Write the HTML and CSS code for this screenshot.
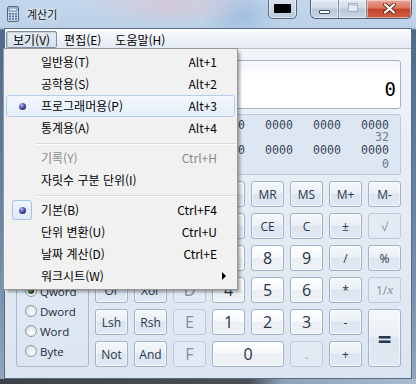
FILE: index.html
```html
<!DOCTYPE html>
<html lang="ko">
<head>
  <meta charset="UTF-8">
  <meta name="viewport" content="width=device-width, initial-scale=1.0">
  <title>계산기</title>
  <link rel="stylesheet" href="styles.css">
</head>
<body>

  <div class="window">
    <div class="titlebar">
      <svg class="app-icon" width="16" height="16" viewBox="0 0 16 16">
        <rect x="2.5" y="0.5" width="11" height="15" rx="1.5" fill="#cfd8e2" stroke="#56687c"/>
        <rect x="4" y="2" width="8" height="3" fill="#d8ecfa" stroke="#4f7fa8" stroke-width="0.8"/>
        <g fill="#3f78b5">
          <rect x="4" y="7" width="2" height="1.6"/><rect x="7" y="7" width="2" height="1.6"/><rect x="10" y="7" width="2" height="1.6"/>
          <rect x="4" y="9.6" width="2" height="1.6"/><rect x="7" y="9.6" width="2" height="1.6"/><rect x="10" y="9.6" width="2" height="1.6"/>
          <rect x="4" y="12.2" width="2" height="1.6"/><rect x="7" y="12.2" width="2" height="1.6"/><rect x="10" y="12.2" width="2" height="1.6"/>
        </g>
      </svg>
      <span class="title">계산기</span>
      <div class="tool-btn"><span class="tool-glyph"></span></div>
      <div class="caption">
        <div class="cap cap-min"><span class="min-glyph"></span></div>
        <div class="cap cap-max"><span class="max-glyph"></span></div>
        <div class="cap cap-close">
          <svg width="13" height="11" viewBox="0 0 13 11">
            <path d="M2 1.5 L11 9.5 M11 1.5 L2 9.5" stroke="#6a2a1e" stroke-width="4" stroke-linecap="round"/>
            <path d="M2 1.5 L11 9.5 M11 1.5 L2 9.5" stroke="#ffffff" stroke-width="2.2" stroke-linecap="round"/>
          </svg>
        </div>
      </div>
    </div>

    <div class="client">
      <div class="menubar">
        <span class="mb-item open">보기(V)</span>
        <span class="mb-item">편집(E)</span>
        <span class="mb-item">도움말(H)</span>
      </div>

      <div class="content">
        <div class="display"><span class="result">0</span></div>

        <div class="bits">
          <span>0000</span><span>0000</span><span>0000</span><span>0000</span>
          <span>0000</span><span>0000</span><span>0000</span><span>0000</span>
          <span class="lbl c1">63</span><span class="lbl c5">47</span><span class="lbl c8">32</span>
          <span>0000</span><span>0000</span><span>0000</span><span>0000</span>
          <span>0000</span><span>0000</span><span>0000</span><span>0000</span>
          <span class="lbl c1">31</span><span class="lbl c5">15</span><span class="lbl c8">0</span>
        </div>

        <div class="lower">
          <div class="modes">
            <div class="group">
              <div class="radio"><span class="ring"></span>Hex</div>
              <div class="radio on"><span class="ring"></span>Dec</div>
              <div class="radio"><span class="ring"></span>Oct</div>
              <div class="radio"><span class="ring"></span>Bin</div>
            </div>
            <div class="group">
              <div class="radio on"><span class="ring"></span>Qword</div>
              <div class="radio"><span class="ring"></span>Dword</div>
              <div class="radio"><span class="ring"></span>Word</div>
              <div class="radio"><span class="ring"></span>Byte</div>
            </div>
          </div>

          <div class="keypad">
            <div class="key off"></div>
            <div class="key">Mod</div>
            <div class="key num off">A</div>
            <div class="key">MC</div>
            <div class="key">MR</div>
            <div class="key">MS</div>
            <div class="key">M+</div>
            <div class="key">M-</div>

            <div class="key">(</div>
            <div class="key">)</div>
            <div class="key num off">B</div>
            <div class="key">&larr;</div>
            <div class="key">CE</div>
            <div class="key">C</div>
            <div class="key">&plusmn;</div>
            <div class="key off">&radic;</div>

            <div class="key">RoL</div>
            <div class="key">RoR</div>
            <div class="key num off">C</div>
            <div class="key num">7</div>
            <div class="key num">8</div>
            <div class="key num">9</div>
            <div class="key">/</div>
            <div class="key">%</div>

            <div class="key">Or</div>
            <div class="key">Xor</div>
            <div class="key num off">D</div>
            <div class="key num">4</div>
            <div class="key num">5</div>
            <div class="key num">6</div>
            <div class="key">*</div>
            <div class="key off">1/<i>x</i></div>

            <div class="key">Lsh</div>
            <div class="key">Rsh</div>
            <div class="key num off">E</div>
            <div class="key num">1</div>
            <div class="key num">2</div>
            <div class="key num">3</div>
            <div class="key">-</div>
            <div class="key equals">=</div>

            <div class="key">Not</div>
            <div class="key">And</div>
            <div class="key num off">F</div>
            <div class="key num zero">0</div>
            <div class="key off">.</div>
            <div class="key">+</div>
          </div>
        </div>
      </div>
    </div>
    <div class="frame-bottom"></div>

    <!-- open "보기" menu -->
    <div class="dropdown">
      <div class="item"><span class="mark"></span><span class="label">일반용(T)</span><span class="keys">Alt+1</span><span class="sub"></span></div>
      <div class="item"><span class="mark"></span><span class="label">공학용(S)</span><span class="keys">Alt+2</span><span class="sub"></span></div>
      <div class="item hover"><span class="mark"><span class="bullet"></span></span><span class="label">프로그래머용(P)</span><span class="keys">Alt+3</span><span class="sub"></span></div>
      <div class="item"><span class="mark"></span><span class="label">통계용(A)</span><span class="keys">Alt+4</span><span class="sub"></span></div>
      <div class="sep"></div>
      <div class="item disabled"><span class="mark"></span><span class="label">기록(Y)</span><span class="keys">Ctrl+H</span><span class="sub"></span></div>
      <div class="item"><span class="mark"></span><span class="label">자릿수 구분 단위(I)</span><span class="keys"></span><span class="sub"></span></div>
      <div class="sep"></div>
      <div class="item checked"><span class="mark"><span class="bullet"></span></span><span class="label">기본(B)</span><span class="keys">Ctrl+F4</span><span class="sub"></span></div>
      <div class="item"><span class="mark"></span><span class="label">단위 변환(U)</span><span class="keys">Ctrl+U</span><span class="sub"></span></div>
      <div class="item"><span class="mark"></span><span class="label">날짜 계산(D)</span><span class="keys">Ctrl+E</span><span class="sub"></span></div>
      <div class="item"><span class="mark"></span><span class="label">워크시트(W)</span><span class="keys"></span><span class="sub"><span class="arrow"></span></span></div>
    </div>
  </div>

</body>
</html>
```

FILE: styles.css
```css
* {
  box-sizing: border-box;
}

html, body {
  margin: 0;
  padding: 0;
}

body {
  width: 416px;
  height: 384px;
  overflow: hidden;
  font-family: "Noto Sans CJK KR", "Noto Sans", sans-serif;
  font-size: 12px;
  color: #000;
}

.window {
  position: relative;
  width: 416px;
  height: 384px;
  display: flex;
  flex-direction: column;
  background:
    radial-gradient(ellipse 90px 20px at 170px 6px, rgba(214, 200, 214, 0.9), rgba(214, 200, 214, 0) 100%),
    radial-gradient(ellipse 40px 30px at 240px 14px, rgba(150, 185, 222, 0.8), rgba(150, 185, 222, 0) 100%),
    linear-gradient(180deg, #c3d7ec 0px, #bcd1e8 28px, #4d6a8b 30px, #6e8aa8 250px, #8ea6bf 378px);
}

/* title bar */

.titlebar {
  height: 28px;
  display: flex;
  align-items: flex-start;
  padding-left: 5px;
}

.app-icon {
  margin-top: 6px;
  flex: none;
}

.title {
  margin-left: 6px;
  margin-top: 6px;
  font-size: 11px;
  line-height: 16px;
  color: #111;
  text-shadow: 0 0 6px rgba(255, 255, 255, 0.9), 0 0 3px rgba(255, 255, 255, 0.9);
}

.tool-btn {
  margin-left: auto;
  margin-top: -1px;
  width: 29px;
  height: 20px;
  border: 1px solid #5b6b7e;
  border-top: none;
  border-radius: 0 0 5px 5px;
  background: linear-gradient(180deg, #d9e3ee, #b9c9db);
  display: flex;
  align-items: center;
  justify-content: center;
  box-shadow: inset 0 0 0 1px rgba(255, 255, 255, 0.5);
}

.tool-glyph {
  width: 17px;
  height: 9px;
  background: #000;
  border-radius: 1px;
}

.caption {
  margin-left: 13px;
  margin-right: 4px;
  width: 102px;
  height: 19px;
  display: flex;
  border: 1px solid #4f5e70;
  border-top: none;
  border-radius: 0 0 6px 6px;
  overflow: hidden;
}

.cap {
  height: 100%;
  display: flex;
  align-items: center;
  justify-content: center;
  background: linear-gradient(180deg, #e2e9f1 0%, #cfdbe7 45%, #b8c8da 50%, #c9d6e4 100%);
  box-shadow: inset 0 0 0 1px rgba(255, 255, 255, 0.45);
}

.cap-min {
  width: 28px;
  border-right: 1px solid #7e8da0;
}

.cap-max {
  width: 28px;
  border-right: 1px solid #7e8da0;
}

.cap-close {
  flex: 1;
  background: linear-gradient(180deg, #e9a796 0%, #d9735c 45%, #c4432c 52%, #d0604a 100%);
}

.min-glyph {
  width: 11px;
  height: 4px;
  margin-top: 6px;
  background: #fff;
  border: 1px solid #3c4b5d;
  border-radius: 1px;
}

.max-glyph {
  width: 10px;
  height: 9px;
  margin-top: -3px;
  border: 1px solid #a2afbe;
  background: #e4ebf2;
  box-shadow: inset 0 2px 0 #c4d0dd;
}

.cap-close svg {
  margin-top: -2px;
}

/* client area */

.client {
  margin: 0 4px;
  height: 351px;
  border: 1px solid #5a6c82;
  display: flex;
  flex-direction: column;
  background: linear-gradient(180deg, #f3f6fa 0%, #e7edf5 40%, #dbe5f1 100%);
}

.frame-bottom {
  flex: 1;
  background: linear-gradient(90deg, #3f4348 0%, #4b4f55 60%, #8ea3b9 68%, #a9bccf 100%);
}

.menubar {
  height: 20px;
  display: flex;
  align-items: flex-start;
  padding: 2px 0 0 1px;
  border-bottom: 1px solid #b7bfcb;
  background: linear-gradient(180deg, #fbfcfe, #e3e9f2);
}

.mb-item {
  height: 17px;
  padding: 0 6px;
  border: 1px solid transparent;
  border-radius: 2px;
  line-height: 15px;
}

.mb-item.open {
  border-color: #7f90a6;
  background: linear-gradient(180deg, #e6ecf3, #d6e0eb);
  box-shadow: inset 1px 1px 1px rgba(0, 0, 0, 0.12);
}

.content {
  flex: 1;
  padding: 11px 10px 0 11px;
  display: flex;
  flex-direction: column;
}

.display {
  height: 49px;
  border: 1px solid #a2b1c3;
  border-radius: 3px;
  background: linear-gradient(180deg, #f4f7fb, #ffffff 45%);
  display: flex;
  justify-content: flex-end;
  align-items: flex-end;
  padding: 0 4px 8px 0;
}

.result {
  font-family: "DejaVu Sans Mono", monospace;
  font-size: 19px;
  line-height: 22px;
}

.bits {
  margin-top: 5px;
  height: 61px;
  border: 1px solid #bac8d9;
  border-radius: 3px;
  background: #dde7f3;
  padding: 4px 0 0 8px;
  display: grid;
  grid-template-columns: repeat(8, 28px);
  grid-template-rows: 12px 13px 14px 13px;
  column-gap: 20px;
  font-family: "DejaVu Sans Mono", monospace;
  font-size: 11.6px;
  line-height: 13px;
  color: #3b4859;
}

.bits .lbl {
  color: #6a7888;
}

.bits .c1 {
  grid-column: 1;
}

.bits .c5 {
  grid-column: 5;
}

.bits .c8 {
  grid-column: 8;
  text-align: right;
}

.lower {
  margin-top: 6px;
  display: flex;
  gap: 6px;
}

.modes {
  width: 73px;
  display: flex;
  flex-direction: column;
  gap: 6px;
}

.group {
  height: 90px;
  border: 1px solid #a9b8ca;
  border-radius: 3px;
  padding-top: 3px;
}

.radio {
  height: 20px;
  display: flex;
  align-items: center;
  padding-left: 8px;
  font-family: "Open Sans", sans-serif;
  font-size: 11.5px;
  color: #1d2a3a;
}

.ring {
  width: 12px;
  height: 12px;
  margin-right: 3px;
  border-radius: 50%;
  border: 1px solid #8d99a6;
  background: radial-gradient(circle at 60% 65%, #ffffff 0%, #eceff2 45%, #c5ccd4 100%);
  display: flex;
  align-items: center;
  justify-content: center;
}

.radio.on .ring::after {
  content: "";
  width: 6px;
  height: 6px;
  border-radius: 50%;
  background: radial-gradient(circle at 35% 35%, #7fb07f, #1f5524 55%, #0c2a0f);
}

.keypad {
  display: grid;
  grid-template-columns: repeat(8, 33px);
  grid-template-rows: repeat(6, 26px);
  gap: 6px;
}

.key {
  border: 1px solid #a1b2c6;
  border-radius: 3px;
  background: linear-gradient(180deg, #f5f8fb 0%, #eaf0f6 46%, #dce5ef 52%, #e2e9f2 100%);
  box-shadow: inset 0 0 0 1px rgba(255, 255, 255, 0.55);
  display: flex;
  align-items: center;
  justify-content: center;
  font-family: "Open Sans", sans-serif;
  font-size: 12px;
  color: #26384e;
}

.key.num {
  background: linear-gradient(180deg, #ffffff 0%, #f7f9fc 46%, #ebf0f6 52%, #f0f4f8 100%);
  font-size: 16px;
  color: #2a3340;
}

.key.off {
  background: #e3eaf3;
  border-color: #bdc9d7;
  box-shadow: none;
  color: #7f8fa2;
}

.key.zero {
  grid-column: span 2;
}

.key.equals {
  grid-row: span 2;
  font-size: 24px;
  font-weight: 700;
}

.key i {
  font-family: "Liberation Serif", serif;
  font-size: 13px;
}

/* dropdown menu */

.dropdown {
  position: absolute;
  left: 3px;
  top: 48px;
  width: 235px;
  padding: 2px 1px;
  border: 1px solid #979797;
  background: #f1f1f1;
  box-shadow: 3px 3px 3px -1px rgba(0, 0, 0, 0.35);
  display: flex;
  flex-direction: column;
}

.item {
  height: 22px;
  margin: 0 1px;
  border: 1px solid transparent;
  border-radius: 3px;
  display: flex;
  align-items: center;
}

.item.hover {
  border-color: #b3cdee;
  background: linear-gradient(180deg, #f2f7fd, #e5eefa);
}

.item.disabled {
  color: #8a8a8a;
}

.mark {
  width: 20px;
  height: 20px;
  margin-left: 5px;
  border: 1px solid transparent;
  border-radius: 3px;
  display: flex;
  align-items: center;
  justify-content: center;
  flex: none;
}

.item.checked .mark {
  border-color: #a6c3e6;
  background: linear-gradient(180deg, #eef4fc, #e0ebf8);
}

.bullet {
  width: 7px;
  height: 7px;
  border-radius: 50%;
  background: radial-gradient(circle at 35% 30%, #b9b9f0, #40409c 55%, #1f1f5e);
}

.label {
  margin-left: 9px;
  flex: 1;
  line-height: 16px;
}

.keys {
  line-height: 16px;
}

.sub {
  width: 17px;
  display: flex;
  align-items: center;
  padding-left: 5px;
  flex: none;
}

.arrow {
  width: 0;
  height: 0;
  border-left: 4px solid #000;
  border-top: 4px solid transparent;
  border-bottom: 4px solid transparent;
}

.sep {
  height: 8px;
  margin-left: 30px;
  display: flex;
  align-items: center;
}

.sep::after {
  content: "";
  flex: 1;
  height: 1px;
  background: #dcdcdc;
  box-shadow: 0 1px 0 #ffffff;
}
```
